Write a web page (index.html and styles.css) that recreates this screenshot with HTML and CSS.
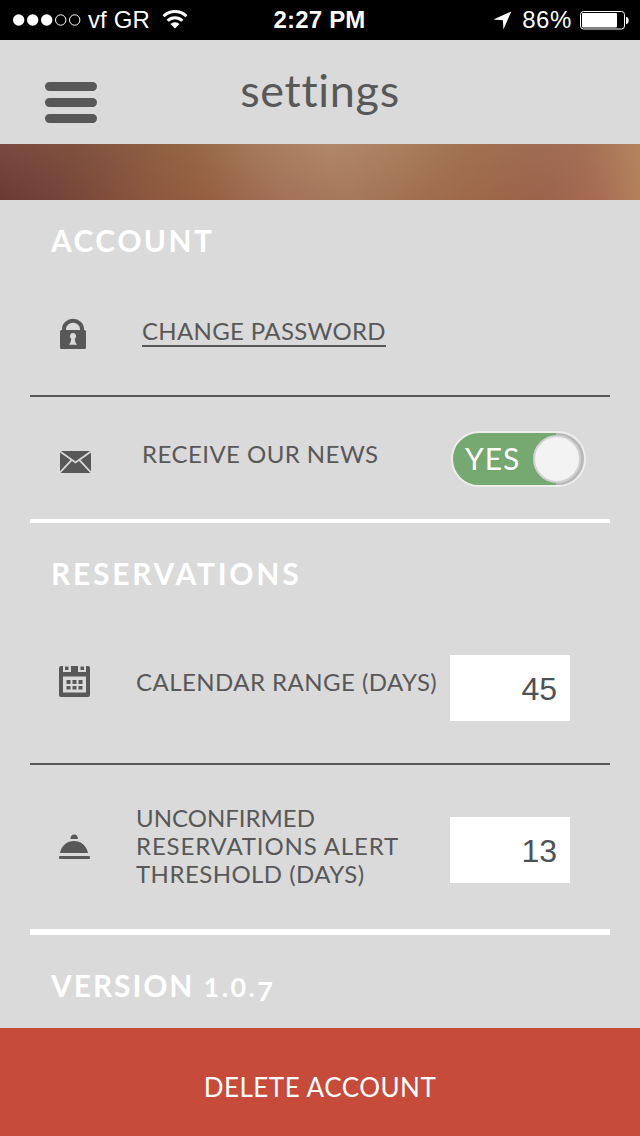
FILE: index.html
```
<!DOCTYPE html>
<html lang="en">
<head>
  <meta charset="UTF-8">
  <meta name="viewport" content="width=device-width, initial-scale=1.0">
  <title>Settings</title>
  <link rel="stylesheet" href="styles.css">
</head>
<body>
  <div class="status-bar">
    <div class="status-left">
      <svg class="signal" width="68" height="14" viewBox="0 0 68 14">
        <g fill="#fff">
          <circle cx="5.7" cy="7" r="5.7"/>
          <circle cx="19.7" cy="7" r="5.7"/>
          <circle cx="33.7" cy="7" r="5.7"/>
        </g>
        <g fill="none" stroke="#fff" stroke-width="1">
          <circle cx="47.7" cy="7" r="5.2"/>
          <circle cx="61.7" cy="7" r="5.2"/>
        </g>
      </svg>
      <span class="carrier">vf GR</span>
      <svg class="wifi" width="26" height="20" viewBox="0 0 26 20">
        <g fill="none" stroke="#fff" stroke-width="3">
          <path d="M1.500 6.200a16.300 16.300 0 0 1 23 0"/>
          <path d="M5.600 10.800a10.500 10.500 0 0 1 14.800 0"/>
        </g>
        <path d="M13 18.500l-4.500-4.500a6.400 6.400 0 0 1 9 0z" fill="#fff"/>
      </svg>
    </div>
    <div class="clock">2:27 PM</div>
    <div class="status-right">
      <svg width="19" height="19" viewBox="0 0 19 19"><path d="M18.4.4L10.4 18.4 9.9 9.2.4 8.5z" fill="#fff"/></svg>
      <span class="percent">86%</span>
      <svg width="49" height="20" viewBox="0 0 49 20">
        <rect x=".5" y="1.5" width="44" height="17.5" rx="3" fill="none" stroke="#fff"/>
        <rect x="2" y="3" width="35" height="14.5" rx="1" fill="#fff"/>
        <path d="M46 7c3.600 0 3.600 7 0 7z" fill="#fff"/>
      </svg>
    </div>
  </div>

  <header class="header">
    <button class="menu-button" aria-label="Menu">
      <span></span><span></span><span></span>
    </button>
    <h1>settings</h1>
  </header>
  <div class="banner"></div>

  <main>
    <section class="section account">
      <h2>ACCOUNT</h2>
      <div class="row row-password">
        <svg class="icon" width="32" height="32" viewBox="0 0 32 32">
          <path d="M4 13V10.800a9 8 0 0 1 18 0V13" fill="none" stroke="#585858" stroke-width="4"/>
          <path d="M1.500 12h23a1.500 1.500 0 0 1 1.500 1.500v16a1.500 1.500 0 0 1-1.500 1.500h-23A1.500 1.500 0 0 1 0 29.500v-16A1.500 1.500 0 0 1 1.500 12z" fill="#585858"/>
          <path d="M13 15a3.200 3.200 0 0 1 1.800 5.800c0 2 .6 3.800 2.200 6H9c1.600-2.200 2.200-4 2.200-6A3.200 3.200 0 0 1 13 15z" fill="#dadada"/>
        </svg>
        <a class="label" href="#">CHANGE PASSWORD</a>
      </div>
      <div class="row row-news">
        <svg class="icon" width="32" height="24" viewBox="0 0 32 24">
          <rect x="0" y="1" width="31" height="22" rx="1.500" fill="#585858"/>
          <path d="M0 1.500L15.500 12.500 31 1.500M0 22.500l11.500-12.300M31 22.500L19.500 10.200" fill="none" stroke="#dadada" stroke-width="1.800"/>
        </svg>
        <span class="label">RECEIVE OUR NEWS</span>
        <div class="toggle" role="switch" aria-checked="true">
          <span class="toggle-text">YES</span>
          <span class="knob"></span>
        </div>
      </div>
    </section>

    <section class="section reservations">
      <h2>RESERVATIONS</h2>
      <div class="row row-range">
        <svg class="icon" width="32" height="32" viewBox="0 0 32 32">
          <path d="M0 2q0-2 2-2h2v6h8V0h7v6h8V0h2q2 0 2 2v27q0 2-2 2H2q-2 0-2-2zM4 10.500v16h23v-16z" fill="#585858" fill-rule="evenodd"/>
          <path d="M6 .500h3.500v3.500H6zM21.500 .500H25v3.500h-3.500zM7.500 14h4v4h-4zM13.500 14h4v4h-4zM19.500 14h4v4h-4zM7.500 20h4v3.500h-4zM13.500 20h4v3.500h-4zM19.500 20h4v3.500h-4z" fill="#585858"/>
        </svg>
        <span class="label">CALENDAR RANGE (DAYS)</span>
        <input class="days" type="text" value="45">
      </div>
      <div class="row row-alert">
        <svg class="icon" width="32" height="26" viewBox="0 0 32 26">
          <path d="M11.500 5q0-4.500 3.700-4.500t3.700 4.500zM1 19C2.500 11.500 8 7 15 7s12.500 4.500 14 12z" fill="#585858"/>
          <rect x="0" y="22" width="31" height="3" rx="1" fill="#585858"/>
        </svg>
        <span class="label"><span class="narrow">UNCONFIRMED</span><br><span class="wide">RESERVATIONS ALERT</span><br>THRESHOLD (DAYS)</span>
        <input class="days" type="text" value="13">
      </div>
    </section>

    <section class="version">
      <h2>VERSION <span class="digits">1.0.<span class="low">7</span></span></h2>
    </section>
  </main>

  <button class="delete-button">DELETE ACCOUNT</button>
</body>
</html>
```

FILE: styles.css
```
* {
  box-sizing: border-box;
}

body {
  margin: 0;
  width: 640px;
  height: 1136px;
  overflow: hidden;
  display: flex;
  flex-direction: column;
  background: #dadada;
  color: #585858;
  font-family: Lato, "Open Sans", sans-serif;
}

svg {
  display: block;
  flex: none;
}

button {
  border: none;
  padding: 0;
  font-family: inherit;
}

/* status bar */
.status-bar {
  height: 40px;
  background: #000;
  color: #fff;
  display: grid;
  grid-template-columns: 1fr auto 1fr;
  align-items: center;
  padding: 0 11px 0 13px;
  font-family: "Liberation Sans", Arial, sans-serif;
  font-size: 24px;
  line-height: 40px;
}

.status-left,
.status-right {
  display: flex;
  align-items: center;
}

.status-right {
  justify-content: flex-end;
}

.signal {
  margin-bottom: 1px;
}

.carrier {
  margin: 0 12px 0 7px;
  letter-spacing: 0.1px;
}

.clock {
  font-weight: bold;
  margin-right: 3px;
  letter-spacing: 0.2px;
}

.percent {
  margin: 0 8px 0 10px;
  letter-spacing: 0.6px;
}

/* header */
.header {
  height: 104px;
  display: grid;
  grid-template-columns: 52px 1fr 52px;
  padding: 0 45px;
}

.menu-button {
  margin-top: 42px;
  height: 42px;
  background: none;
  display: flex;
  flex-direction: column;
  gap: 7px;
}

.menu-button span {
  width: 52px;
  height: 9px;
  border-radius: 4.5px;
  background: #585858;
}

h1 {
  margin: 0;
  text-align: center;
  font-size: 45px;
  font-weight: 400;
  line-height: 100px;
  letter-spacing: 0.7px;
  font-variant-ligatures: none;
}

/* two blended strips, the lower one fades in towards the bottom */
.banner {
  height: 56px;
  background: linear-gradient(90deg, #7b4b40 0, #80503f 70px, #966744 190px, #a5795a 250px, #b1896a 330px, #aa805f 400px, #a27351 460px, #a06c54 530px, #a36e55 580px, #b5855f 640px);
}

.banner::after {
  content: "";
  display: block;
  height: 100%;
  background: linear-gradient(90deg, #6b3a32 0, #75443a 60px, #8c573e 150px, #965f42 210px, #a37159 280px, #a6785c 350px, #a06d4e 430px, #9c6549 500px, #9b634c 550px, #a66d54 600px, #b3805c 640px);
  -webkit-mask-image: linear-gradient(transparent, #000);
  mask-image: linear-gradient(transparent, #000);
}

/* sections */
.section {
  margin: 0 30px;
}

.account {
  height: 323px;
  border-bottom: 4px solid #fff;
}

.reservations {
  height: 412px;
  border-bottom: 6px solid #fff;
}

h2 {
  margin: 0;
  padding-left: 21px;
  color: #fff;
  font-size: 30px;
  font-weight: 700;
  line-height: 80px;
  letter-spacing: 2.4px;
}

.row {
  display: flex;
  align-items: flex-start;
  padding-left: 30px;
}

.label {
  color: #585858;
  font-size: 24px;
  line-height: 28px;
  letter-spacing: 0.45px;
}

.row-password {
  height: 117px;
  padding-top: 38px;
  border-bottom: 2px solid #585858;
}

.row-password .label {
  margin-left: 50px;
  padding-bottom: 2px;
  line-height: 25px;
  letter-spacing: 0.33px;
  text-decoration: none;
  border-bottom: 2px solid #585858;
}

.row-news {
  padding-top: 34px;
}

.row-news .icon {
  margin-top: 19px;
}

.row-news .label {
  margin: 9px 0 0 50px;
}

.toggle {
  width: 135px;
  height: 56px;
  margin: 0 24px 0 auto;
  border: 2px solid #eee;
  border-radius: 28px;
  background: linear-gradient(90deg, #76a871 103px, #b9b9b9 103px);
  display: flex;
  align-items: center;
  justify-content: space-between;
  padding: 0 3px 0 12px;
}

.toggle-text {
  color: #fff;
  font-size: 30px;
  letter-spacing: 1px;
  padding-bottom: 2px;
}

.knob {
  width: 48px;
  height: 48px;
  border-radius: 50%;
  border: 2px solid #d2d2d2;
  background: #f3f3f3;
}

.reservations h2 {
  line-height: 101px;
  letter-spacing: 2.75px;
}

.row-range {
  height: 141px;
  padding: 31px 40px 0 29px;
  border-bottom: 2px solid #585858;
}

.row-range .icon {
  margin-top: 11px;
}

.row-range .label {
  margin: 13px 0 0 45px;
}

.row-alert {
  padding: 40px 40px 0 29px;
}

.row-alert .icon {
  margin-top: 29px;
}

.row-alert .label {
  margin: -1px 0 0 45px;
}

.narrow {
  letter-spacing: 0;
}

.wide {
  letter-spacing: 0.85px;
}

.days {
  width: 120px;
  height: 66px;
  margin-left: auto;
  border: 0;
  padding: 2px 13px 0 0;
  background: #fff;
  color: #4c5357;
  font-family: "Liberation Sans", Arial, sans-serif;
  font-size: 32px;
  text-align: right;
}

.row-alert .days {
  margin-top: 12px;
}

.version {
  height: 93px;
  padding: 0 30px;
}

.version h2 {
  line-height: 101px;
  letter-spacing: 1.9px;
}

/* old style figures, the 7 hangs below the baseline */
.digits {
  font-size: 27px;
  letter-spacing: 2.4px;
}

.low {
  vertical-align: -4px;
  line-height: 1;
}

.delete-button {
  flex: 1;
  padding-top: 9px;
  background: #c74b3b;
  color: #fff;
  font-size: 26px;
  letter-spacing: 0.5px;
}
```
